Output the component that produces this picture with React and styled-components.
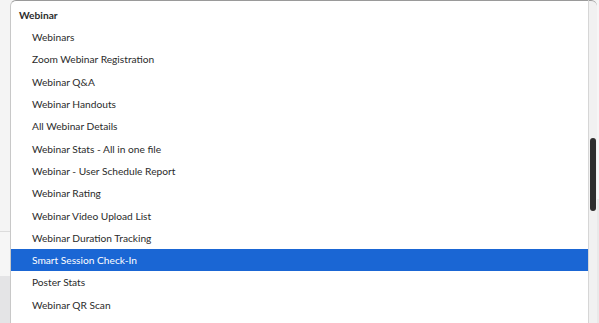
import React from "react";
import styled, { createGlobalStyle } from "styled-components";

const GlobalStyle = createGlobalStyle`
  html, body {
    margin: 0;
    padding: 0;
    background: #f4f4f4;
    overflow: hidden;
  }
  * { box-sizing: border-box; }
`;

const Page = styled.div`
  display: flex;
  width: 599px;
  height: 323px;
  overflow: hidden;
  font-family: Lato, "Open Sans", sans-serif;
`;

const LeftStrip = styled.div`
  width: 10px;
  display: flex;
  flex-direction: column;
`;

const StripPart = styled.div`
  height: ${p => p.h}px;
  flex: ${p => (p.h ? "none" : 1)};
  background: ${p => p.bg};
  border-bottom: ${p => (p.line ? "1px solid #dcdcdc" : "none")};
`;

const Panel = styled.div`
  flex: 1;
  display: flex;
  flex-direction: column;
  background: #fff;
  border-top: 1px solid #9a9a9a;
  border-left: 1px solid #c8c8c8;
  border-top-left-radius: 6px;
  overflow: hidden;
`;

const List = styled.div`
  margin-top: -19.6px;
  display: flex;
  flex-direction: column;
`;

const Row = styled.div`
  height: 22.3px;
  display: flex;
  align-items: center;
  padding-left: ${p => (p.group ? 8 : 21)}px;
  font-size: 10.2px;
  font-weight: ${p => (p.group ? 700 : 400)};
  color: ${p => (p.active ? "#fff" : "#2b2b2b")};
  background: ${p => (p.active ? "#1a66d4" : "transparent")};
  white-space: nowrap;
`;

const Track = styled.div`
  width: 9px;
  background: #f1f1f1;
  border-left: 1px solid #d6d6d6;
  border-top: 1px solid #9a9a9a;
  border-top-right-radius: 6px;
  padding: 137px 2px 0 1px;
`;

const Thumb = styled.div`
  width: 6px;
  height: 73px;
  border-radius: 3px;
  background: #2e2e2e;
`;

const RightStrip = styled.div`
  width: 2px;
  background: #f6f6f6;
  display: flex;
  flex-direction: column;
`;

const items = [
  { label: "Job Applicant reg status" },
  { label: "Webinar", group: true },
  { label: "Webinars" },
  { label: "Zoom Webinar Registration" },
  { label: "Webinar Q&A" },
  { label: "Webinar Handouts" },
  { label: "All Webinar Details" },
  { label: "Webinar Stats - All in one file" },
  { label: "Webinar - User Schedule Report" },
  { label: "Webinar Rating" },
  { label: "Webinar Video Upload List" },
  { label: "Webinar Duration Tracking" },
  { label: "Smart Session Check-In", active: true },
  { label: "Poster Stats" },
  { label: "Webinar QR Scan" },
  { label: "Webinar Attendance" },
];

export default function App() {
  return (
    <>
      <GlobalStyle />
      <Page>
        <LeftStrip>
          <StripPart h={232} bg="#f4f4f4" line />
          <StripPart h={44} bg="#f6f6f6" />
          <StripPart bg="#e4e4e6" />
        </LeftStrip>
        <Panel>
          <List>
            {items.map(it => (
              <Row key={it.label} group={it.group} active={it.active}>
                {it.label}
              </Row>
            ))}
          </List>
        </Panel>
        <Track>
          <Thumb />
        </Track>
        <RightStrip>
          <StripPart h={199} bg="#f6f6f6" />
          <StripPart bg="#e9e9e9" />
        </RightStrip>
      </Page>
    </>
  );
}
